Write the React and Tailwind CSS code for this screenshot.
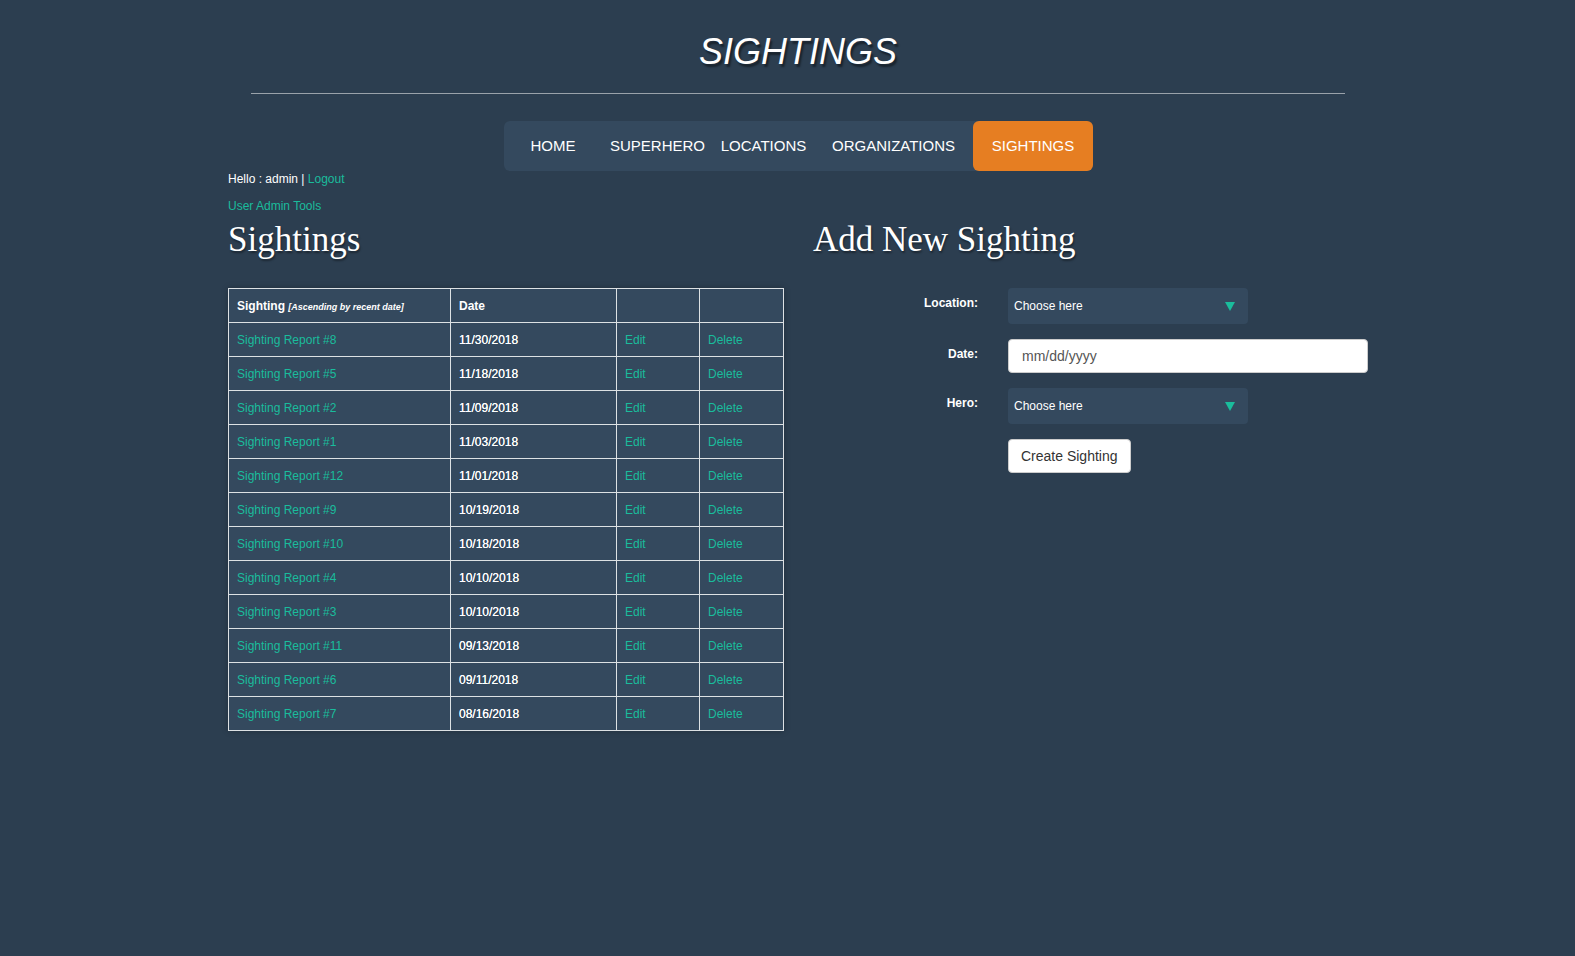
import React from "react";

const rows = [
  ["Sighting Report #8", "11/30/2018"],
  ["Sighting Report #5", "11/18/2018"],
  ["Sighting Report #2", "11/09/2018"],
  ["Sighting Report #1", "11/03/2018"],
  ["Sighting Report #12", "11/01/2018"],
  ["Sighting Report #9", "10/19/2018"],
  ["Sighting Report #10", "10/18/2018"],
  ["Sighting Report #4", "10/10/2018"],
  ["Sighting Report #3", "10/10/2018"],
  ["Sighting Report #11", "09/13/2018"],
  ["Sighting Report #6", "09/11/2018"],
  ["Sighting Report #7", "08/16/2018"],
];

function FakeSelect() {
  return (
    <div className="flex h-[36px] w-[240px] items-center justify-between rounded-[4px] bg-[#34495e] pl-[6px] pr-[13px] text-[12px] text-white">
      <span>Choose here</span>
      <svg width="10" height="9" viewBox="0 0 10 9">
        <polygon points="0,0 10,0 5,9" fill="#1abc9c" />
      </svg>
    </div>
  );
}

export default function App() {
  return (
    <div className="min-h-[956px] w-full bg-[#2c3e50] font-['Liberation_Sans',Arial,sans-serif] text-white">
      <div className="ml-[228px] w-[1140px]">
        <div className="pt-[32px] text-center">
          <h1 className="h-[40px] text-[36px] italic leading-[40px] [text-shadow:2px_3px_2px_rgba(0,0,0,0.45)]">
            SIGHTINGS
          </h1>
        </div>
        <div className="mx-[23px] mt-[21px] h-px bg-[#9aa2aa]" />
        <div className="mt-[27px] flex justify-center pl-[1px]">
          <div className="flex h-[50px] items-stretch rounded-[6px] bg-[#34495e] text-[15px]">
            <div className="flex w-[98px] items-center justify-center">HOME</div>
            <div className="flex w-[111px] items-center justify-center">SUPERHERO</div>
            <div className="flex w-[101px] items-center justify-center">LOCATIONS</div>
            <div className="flex w-[159px] items-center justify-center">ORGANIZATIONS</div>
            <div className="flex w-[120px] items-center justify-center rounded-[6px] bg-[#e67e22]">SIGHTINGS</div>
          </div>
        </div>
        <div className="h-[16px] text-[12px] leading-[16px]">
          Hello : admin | <a className="text-[#1abc9c]">Logout</a>
        </div>
        <div className="mt-[11px] h-[16px] text-[12px] leading-[16px] text-[#1abc9c]">
          User Admin Tools
        </div>
        <div className="mt-[6px] flex">
          <div className="w-[570px]">
            <h2 className="h-[40px] font-['Liberation_Serif',serif] text-[35px] leading-[40px] [text-shadow:1px_2px_2px_rgba(0,0,0,0.4)]">
              Sightings
            </h2>
            <table className="mt-[28px] w-[555px] table-fixed border-collapse bg-[#34495e] text-[12px] shadow-[0_0_6px_rgba(0,0,0,0.25)]">
              <colgroup>
                <col className="w-[222px]" />
                <col className="w-[166px]" />
                <col className="w-[83px]" />
                <col className="w-[84px]" />
              </colgroup>
              <thead>
                <tr className="h-[34px]">
                  <th className="border border-[#dde1e4] px-[8px] text-left font-bold">
                    Sighting <span className="text-[9px] italic">[Ascending by recent date]</span>
                  </th>
                  <th className="border border-[#dde1e4] px-[8px] text-left font-bold">Date</th>
                  <th className="border border-[#dde1e4]"></th>
                  <th className="border border-[#dde1e4]"></th>
                </tr>
              </thead>
              <tbody>
                {rows.map(([name, date]) => (
                  <tr key={name} className="h-[34px]">
                    <td className="border border-[#dde1e4] px-[8px] text-[#1abc9c]">{name}</td>
                    <td className="border border-[#dde1e4] px-[8px] [text-shadow:0_0_0.4px_#fff]">{date}</td>
                    <td className="border border-[#dde1e4] px-[8px] text-[#1abc9c]">Edit</td>
                    <td className="border border-[#dde1e4] px-[8px] text-[#1abc9c]">Delete</td>
                  </tr>
                ))}
              </tbody>
            </table>
          </div>
          <div className="w-[570px] pl-[15px]">
            <h2 className="h-[40px] font-['Liberation_Serif',serif] text-[35px] leading-[40px] [text-shadow:1px_2px_2px_rgba(0,0,0,0.4)]">
              Add New Sighting
            </h2>
            <div className="mt-[28px] flex flex-col gap-[15px]">
              <div className="flex">
                <label className="w-[165px] pt-[7px] text-right text-[12px] font-bold leading-[16px]">Location:</label>
                <div className="ml-[30px]">
                  <FakeSelect />
                </div>
              </div>
              <div className="flex">
                <label className="w-[165px] pt-[7px] text-right text-[12px] font-bold leading-[16px]">Date:</label>
                <div className="ml-[30px]">
                  <input
                    type="text"
                    placeholder="mm/dd/yyyy"
                    className="h-[34px] w-[360px] rounded-[4px] border border-[#ccc] bg-white px-[13px] text-[14px] text-[#555] placeholder:text-[#555] outline-none"
                  />
                </div>
              </div>
              <div className="flex">
                <label className="w-[165px] pt-[7px] text-right text-[12px] font-bold leading-[16px]">Hero:</label>
                <div className="ml-[30px]">
                  <FakeSelect />
                </div>
              </div>
              <div className="flex">
                <div className="w-[165px]" />
                <div className="ml-[30px]">
                  <button className="h-[34px] rounded-[4px] border border-[#ccc] bg-white px-[12px] text-[14px] text-[#333]">
                    Create Sighting
                  </button>
                </div>
              </div>
            </div>
          </div>
        </div>
      </div>
    </div>
  );
}
